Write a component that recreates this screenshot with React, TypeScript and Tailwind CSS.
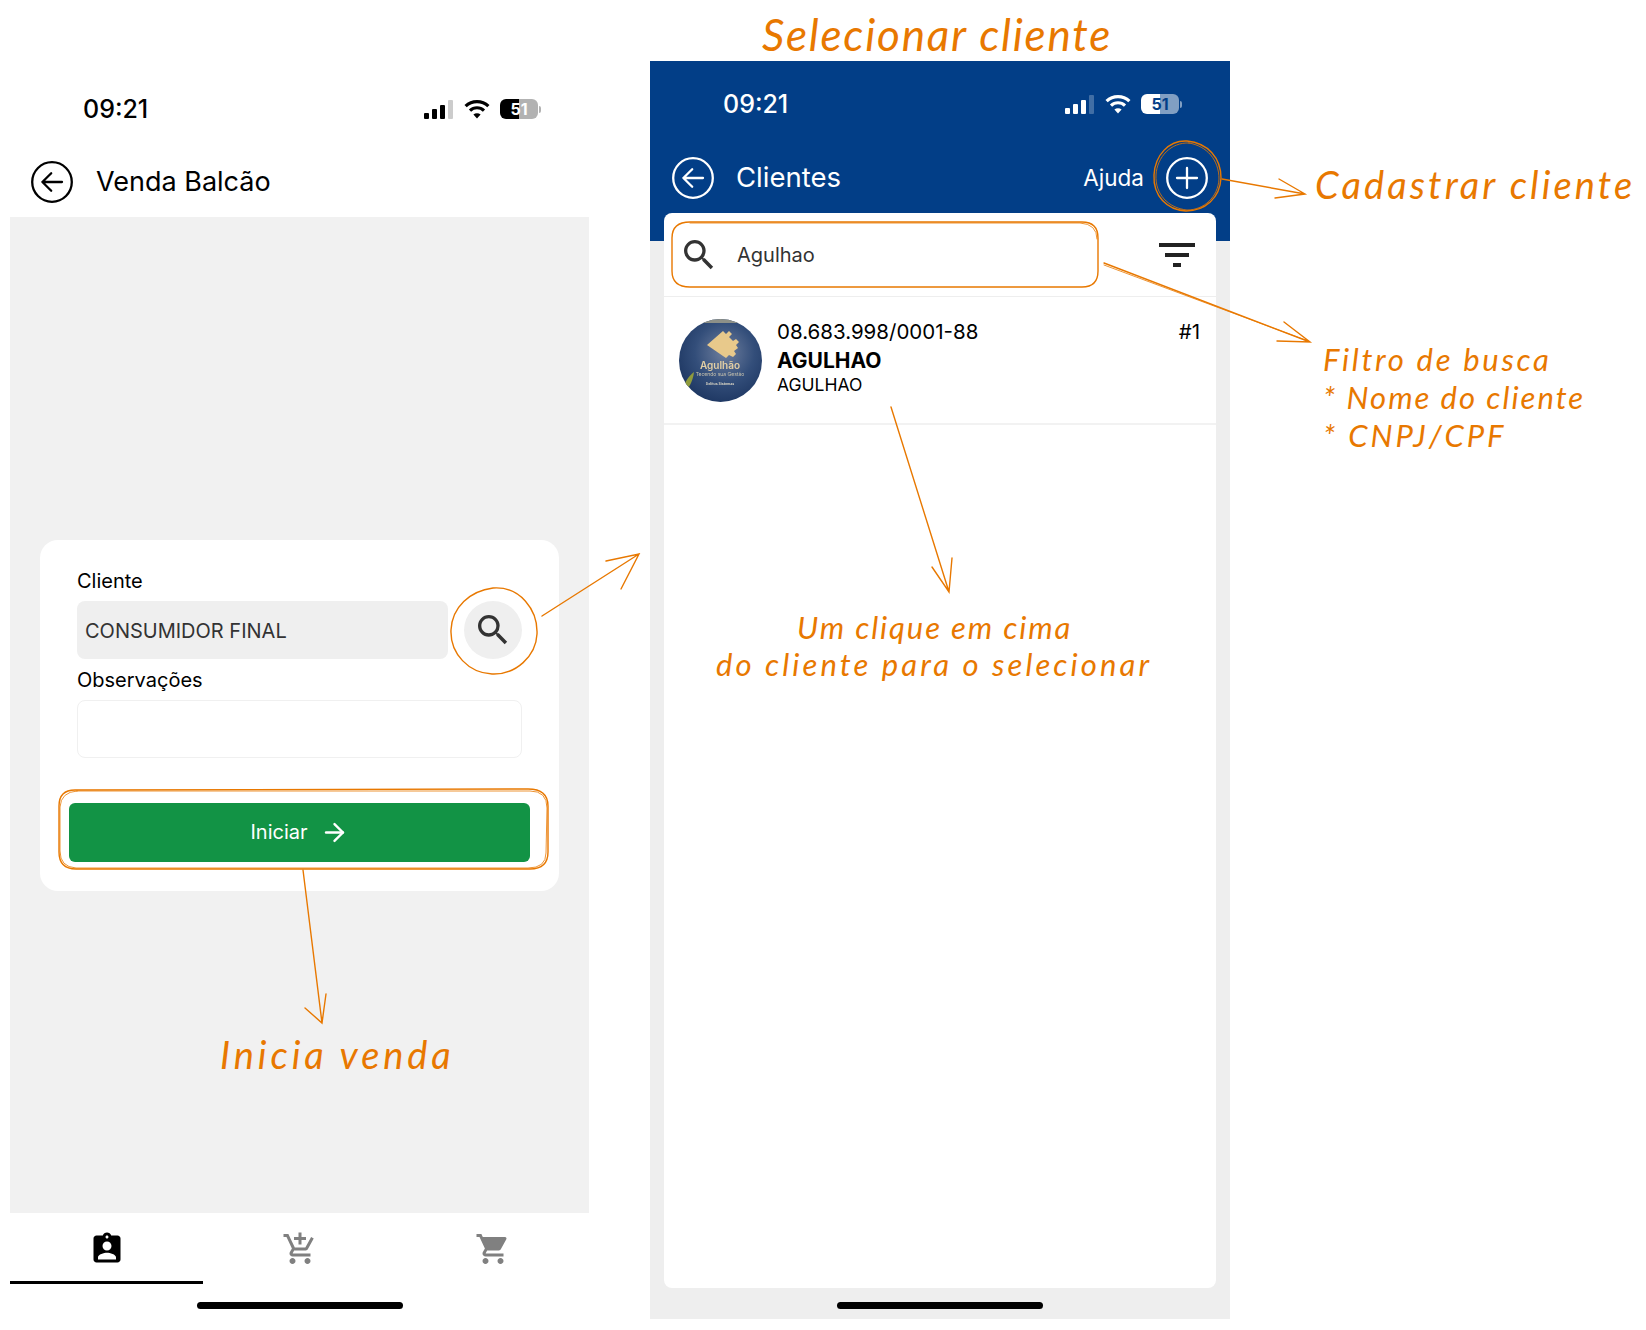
import { ArrowRight } from "lucide-react"
import { MdAddShoppingCart, MdAssignmentInd, MdFilterList, MdSearch, MdShoppingCart } from "react-icons/md"

const StatusBar = ({ light }: { light?: boolean }) => {
  return (
    <div className={`flex h-[48px] items-center justify-between pl-[73px] pr-[48px] ${light ? "text-white" : "text-black"}`}>
      <span className="mt-[2px] text-[25px] font-medium">09:21</span>
      <div className="flex items-center">
        <div className="flex items-end gap-[3px]">
          <div className="h-[6px] w-[5px] rounded-[1px] bg-current" />
          <div className="h-[10px] w-[5px] rounded-[1px] bg-current" />
          <div className="h-[14px] w-[5px] rounded-[1px] bg-current" />
          <div className={`h-[19px] w-[5px] rounded-[1px] ${light ? "bg-white/25" : "bg-black/20"}`} />
        </div>
        <svg width="26" height="20" viewBox="0 0 26 20" fill="none" stroke="currentColor" strokeWidth="3.2" className="ml-[11px]">
          <path d="M1.6 7.2C8 1 18 1 24.4 7.2" />
          <path d="M6 11.6C10 7.8 16 7.8 20 11.6" />
          <path d="M13 19.5 9.4 15.6C11.4 13.9 14.6 13.9 16.6 15.6Z" fill="currentColor" stroke="none" />
        </svg>
        <div className="relative ml-[10px] flex h-[20px] w-[38px] overflow-hidden rounded-[6px]">
          <div className={`h-full w-[51%] ${light ? "bg-white" : "bg-black"}`} />
          <div className={`h-full w-[49%] ${light ? "bg-white/50" : "bg-black/30"}`} />
          <span className={`absolute inset-0 flex items-center justify-center text-[16px] font-bold ${light ? "text-[#023e87]" : "text-white"}`}>51</span>
        </div>
        <div className={`ml-[1px] h-[7px] w-[2px] rounded-r-full ${light ? "bg-white/50" : "bg-black/30"}`} />
      </div>
    </div>
  )
}

const BackCircle = () => {
  return (
    <svg width="48" height="48" viewBox="0 0 24 24" fill="none" stroke="currentColor" strokeWidth="1.15" strokeLinecap="round" strokeLinejoin="round" className="shrink-0">
      <circle cx="12" cy="12" r="9.9" />
      <path d="M17 12H7.2M11.6 7.6 7.2 12l4.4 4.4" />
    </svg>
  )
}

const PlusCircle = () => {
  return (
    <svg width="48" height="48" viewBox="0 0 24 24" fill="none" stroke="currentColor" strokeWidth="1.15" strokeLinecap="round" className="shrink-0">
      <circle cx="12" cy="12" r="9.9" />
      <path d="M7 12h10M12 7v10" />
    </svg>
  )
}

const Avatar = () => {
  return (
    <svg width="83" height="83" viewBox="0 0 83 83" className="shrink-0 rounded-full blur-[0.4px]">
      <defs>
        <radialGradient id="wall" cx="55%" cy="40%" r="65%">
          <stop offset="0%" stopColor="#6f7f9e" />
          <stop offset="55%" stopColor="#334e7a" />
          <stop offset="100%" stopColor="#1c3560" />
        </radialGradient>
      </defs>
      <rect width="83" height="83" fill="url(#wall)" />
      <rect width="83" height="4" fill="#8d9088" />
      <path d="M28 26 44 12l3 3 3-3 3 3-3 3 4 4 3-2 3 3-3 3 2 3-4 3 2 3-3 3-4-2-3 3-3-2Z" fill="#e8c98b" />
      <text x="41" y="50" textAnchor="middle" fontSize="10" fontWeight="600" fill="#e3cfa4" fontFamily="Inter, sans-serif">Agulhão</text>
      <text x="41" y="57" textAnchor="middle" fontSize="5" fill="#c7c2ae" fontFamily="Inter, sans-serif">Tecendo sua Gestão</text>
      <text x="41" y="66" textAnchor="middle" fontSize="3.5" fontWeight="700" fill="#d8d4c4" fontFamily="Inter, sans-serif">Solitus Sistemas</text>
      <path d="M4 70C6 62 10 57 15 53 14 61 11 67 7 72Z" fill="#8f9b3c" />
    </svg>
  )
}

// orange notes drawn on top of the two phones
const Arrows = () => {
  return (
    <svg width="1646" height="1330" viewBox="0 0 1646 1330" fill="none" stroke="#e87800" strokeWidth="1.4" strokeLinecap="round" className="pointer-events-none absolute left-0 top-0">
      <path d="M75 790 528 789Q548 789 548 806L548 852Q548 869 530 869L76 869Q59 869 59 852L59 806Q59 790 75 790Z" />
      <path d="M77 791 530 791Q547 791 547 808L546 853Q546 868 528 868L76 868Q60 867 60 851L60 807Q61 792 77 791Z" strokeWidth="0.8" />
      <path d="M493 588C520 586 538 610 537 634 536 656 516 675 492 674 469 673 450 654 451 630 452 607 470 591 493 588Z" />
      <path d="M542 616 639 554M606 561 639 554 621 589" />
      <path d="M303 870 322 1023M305 1008 322 1023 326 994" />
      <path d="M1187 141C1208 143 1221 158 1221 178 1220 198 1205 211 1186 211 1167 210 1153 196 1154 175 1155 155 1169 140 1187 141Z" />
      <path d="M1189 143C1207 146 1219 160 1219 179 1218 197 1204 210 1187 210 1168 208 1155 194 1156 175 1157 157 1171 142 1189 143Z" strokeWidth="0.8" />
      <path d="M1222 179 1305 194M1279 179 1305 194 1275 198" />
      <path d="M690 222 1082 222Q1098 222 1098 238L1098 271Q1098 287 1082 287L690 287Q672 287 672 271L672 238Q672 222 690 222Z" />
      <path d="M690 223 1080 223Q1097 224 1097 239" strokeWidth="0.8" />
      <path d="M1104 263 1310 342M1284 322 1310 342 1277 341" />
      <path d="M1104 265 1308 341" strokeWidth="0.8" />
      <path d="M891 407 949 592M932 567 949 592 952 558" />
    </svg>
  )
}

const note = "absolute whitespace-nowrap font-['Lato',sans-serif] italic text-[#e87800]"

const App = () => {
  return (
    <div className="relative flex h-[1330px] w-[1646px] gap-[61px] bg-white pl-[10px] pt-[61px] font-['Inter',sans-serif] text-black">

      {/* Venda balcao */}
      <div className="flex h-[1257px] w-[579px] flex-col">
        <div className="pt-[24px]">
          <StatusBar />
        </div>
        <div className="mt-[14px] flex h-[70px] items-center gap-[20px] pl-[18px]">
          <BackCircle />
          <h1 className="text-[27px]">Venda Balcão</h1>
        </div>

        <div className="flex flex-1 items-center bg-[#f1f1f1] px-[30px]">
          <div className="flex w-full flex-col rounded-[18px] bg-white px-[37px] pb-[29px] pt-[28px]">
            <label className="pt-[1px] text-[20px] leading-[24px]">Cliente</label>
            <div className="mt-[8px] flex items-center justify-between">
              <div className="flex h-[58px] w-[371px] items-center rounded-[8px] bg-[#efefef] pl-[8px] pt-[3px] text-[20px] text-[#333]">CONSUMIDOR FINAL</div>
              <div className="flex h-[58px] w-[58px] items-center justify-center rounded-full bg-[#efefef]">
                <MdSearch size={40} className="text-[#333]" />
              </div>
            </div>
            <label className="mt-[8px] pt-[1px] text-[20px] leading-[24px]">Observações</label>
            <div className="mt-[8px] h-[58px] rounded-[8px] border border-[#f0f0f0] bg-white" />
            <button className="-mx-[8px] mt-[45px] flex h-[59px] items-center justify-center gap-[12px] rounded-[6px] bg-[#129345] text-[20px] text-white">
              Iniciar
              <ArrowRight size={29} strokeWidth={2} />
            </button>
          </div>
        </div>

        <div className="flex h-[71px]">
          <div className="flex flex-1 items-center justify-center border-b-[3px] border-black pt-[3px]">
            <MdAssignmentInd size={36} />
          </div>
          <div className="flex flex-1 items-center justify-center pb-[3px] pt-[3px] text-[#808080]">
            <MdAddShoppingCart size={36} />
          </div>
          <div className="flex flex-1 items-center justify-center pb-[3px] pt-[3px] text-[#808080]">
            <MdShoppingCart size={36} />
          </div>
        </div>
        <div className="mx-auto mb-[9px] mt-[18px] h-[7px] w-[206px] rounded-full bg-black" />
      </div>

      {/* Clientes */}
      <div className="flex h-[1258px] w-[580px] flex-col bg-[#eeeeee]">
        <div className="h-[180px] bg-[#023e87] pt-[19px] text-white">
          <StatusBar light />
          <div className="mt-[15px] flex h-[70px] items-center gap-[19px] pl-[19px] pr-[19px]">
            <BackCircle />
            <h1 className="flex-1 text-[27.5px]">Clientes</h1>
            <span className="text-[22.5px]">Ajuda</span>
            <PlusCircle />
          </div>
        </div>

        <div className="relative -mt-[28px] mx-[14px] flex flex-1 flex-col rounded-[8px] bg-white">
          <div className="flex h-[84px] items-center justify-between border-b border-[#eeeeee] pl-[15px] pr-[15px]">
            <div className="flex items-center gap-[18px] text-[20px] text-[#333]">
              <MdSearch size={40} />
              Agulhao
            </div>
            <MdFilterList size={48} className="text-[#222]" />
          </div>

          <div className="flex h-[128px] items-center border-b-2 border-[#f2f2f2] pl-[15px] pr-[16px]">
            <Avatar />
            <div className="ml-[15px] -mt-[5px] flex flex-1 flex-col">
              <div className="flex justify-between text-[20.5px] leading-[26px]">
                <span>08.683.998/0001-88</span>
                <span>#1</span>
              </div>
              <span className="mt-[3px] text-[21px] font-bold leading-[26px]">AGULHAO</span>
              <span className="text-[17.5px] leading-[22px]">AGULHAO</span>
            </div>
          </div>
        </div>

        <div className="flex h-[31px] items-center justify-center">
          <div className="mt-[3px] h-[7px] w-[206px] rounded-full bg-black" />
        </div>
      </div>

      <Arrows />
      <span className={`${note} left-[762px] top-[8px] text-[44px] leading-[52px] tracking-[1.8px]`}>Selecionar cliente</span>
      <span className={`${note} left-[1315px] top-[161px] text-[38px] leading-[46px] tracking-[3.1px]`}>Cadastrar cliente</span>
      <span className={`${note} left-[1323px] top-[340px] text-[31px] leading-[38px] tracking-[2.7px]`}>Filtro de busca</span>
      <span className={`${note} left-[1323px] top-[378px] text-[31px] leading-[38px] tracking-[2px]`}>* Nome do cliente</span>
      <span className={`${note} left-[1323px] top-[416px] text-[31px] leading-[38px] tracking-[2.9px]`}>* CNPJ/CPF</span>
      <span className={`${note} left-[797px] top-[608px] text-[31px] leading-[38px] tracking-[1.9px]`}>Um clique em cima</span>
      <span className={`${note} left-[716px] top-[645px] text-[31px] leading-[38px] tracking-[3.1px]`}>do cliente para o selecionar</span>
      <span className={`${note} left-[220px] top-[1031px] text-[38px] leading-[46px] tracking-[3.9px]`}>Inicia venda</span>
    </div>
  )
}

export default App
